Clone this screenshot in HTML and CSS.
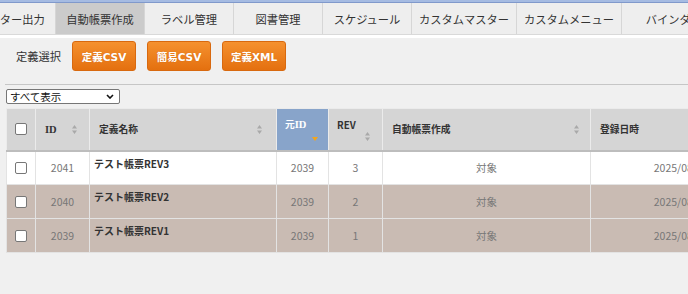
FILE: index.html
```html
<!DOCTYPE html>
<html lang="ja">
<head>
<meta charset="utf-8">
<title>自動帳票作成</title>
<link rel="stylesheet" href="styles.css">
</head>
<body>
<div class="topline"></div>
<nav class="tabs">
  <a class="tab tab-cut">マスター出力</a>
  <a class="tab active">自動帳票作成</a>
  <a class="tab">ラベル管理</a>
  <a class="tab">図書管理</a>
  <a class="tab">スケジュール</a>
  <a class="tab wide">カスタムマスター</a>
  <a class="tab wide">カスタムメニュー</a>
  <a class="tab wide">バインダー</a>
</nav>
<div class="toolbar">
  <span class="label">定義選択</span>
  <button class="btn">定義CSV</button>
  <button class="btn">簡易CSV</button>
  <button class="btn">定義XML</button>
</div>
<div class="content">
  <div class="filter">
    <div class="select-wrap">
      <select class="select"><option>すべて表示</option></select>
      <svg class="chev" width="8" height="5" viewBox="0 0 8 5"><path d="M1 1 L4 4 L7 1" fill="none" stroke="#111" stroke-width="1.6"/></svg>
    </div>
  </div>
  <table class="grid">
    <colgroup>
      <col class="w-check"><col class="w-id"><col class="w-name"><col class="w-src"><col class="w-rev"><col class="w-auto"><col class="w-date">
    </colgroup>
    <thead>
      <tr>
        <th class="h-check"><input type="checkbox" class="cb"></th>
        <th><div class="hc"><span class="serif">ID</span><svg class="sort" width="5" height="9" viewBox="0 0 5 9"><path d="M2.5 0 L5 3.5 L0 3.5Z M0 5.5 L5 5.5 L2.5 9Z" fill="#a9a9a9"/></svg></div></th>
        <th><div class="hc hc-name"><span>定義名称</span><svg class="sort" width="5" height="9" viewBox="0 0 5 9"><path d="M2.5 0 L5 3.5 L0 3.5Z M0 5.5 L5 5.5 L2.5 9Z" fill="#a9a9a9"/></svg></div></th>
        <th class="h-sorted"><div class="hs"><span>元<span class="serif">ID</span></span><div class="icon-row"><svg width="6" height="4" viewBox="0 0 6 4"><path d="M0 0 L6 0 L3 4Z" fill="#f3a51c"/></svg></div></div></th>
        <th><div class="hs hs-rev"><span>REV</span><div class="icon-row"><svg class="sort" width="5" height="9" viewBox="0 0 5 9"><path d="M2.5 0 L5 3.5 L0 3.5Z M0 5.5 L5 5.5 L2.5 9Z" fill="#a9a9a9"/></svg></div></div></th>
        <th><div class="hc hc-auto"><span>自動帳票作成</span><svg class="sort" width="5" height="9" viewBox="0 0 5 9"><path d="M2.5 0 L5 3.5 L0 3.5Z M0 5.5 L5 5.5 L2.5 9Z" fill="#a9a9a9"/></svg></div></th>
        <th><div class="hc"><span>登録日時</span></div></th>
      </tr>
    </thead>
    <tbody>
      <tr class="row">
        <td class="c-check"><input type="checkbox" class="cb"></td>
        <td class="num">2041</td>
        <td class="name">テスト帳票REV3</td>
        <td class="num">2039</td>
        <td class="num">3</td>
        <td class="num">対象</td>
        <td class="num">2025/08/01 10:21</td>
      </tr>
      <tr class="row old">
        <td class="c-check"><input type="checkbox" class="cb"></td>
        <td class="num">2040</td>
        <td class="name">テスト帳票REV2</td>
        <td class="num">2039</td>
        <td class="num">2</td>
        <td class="num">対象</td>
        <td class="num">2025/08/01 10:18</td>
      </tr>
      <tr class="row old">
        <td class="c-check"><input type="checkbox" class="cb"></td>
        <td class="num">2039</td>
        <td class="name">テスト帳票REV1</td>
        <td class="num">2039</td>
        <td class="num">1</td>
        <td class="num">対象</td>
        <td class="num">2025/08/01 10:15</td>
      </tr>
    </tbody>
  </table>
</div>
</body>
</html>
```
FILE: styles.css
```css
* { box-sizing: border-box; }
html, body { margin: 0; }
body {
  width: 688px;
  height: 294px;
  overflow: hidden;
  background: #f0f0f0;
  font-family: "Noto Sans CJK JP", "Noto Sans", sans-serif;
  color: #333;
}
.topline {
  height: 3px;
  background: #a5bbe2;
  border-bottom: 1px solid #8099cb;
}
.tabs {
  display: flex;
  height: 32px;
  background: #eeeeee;
  border-bottom: 1px solid #d9d9d9;
  white-space: nowrap;
}
.tab {
  flex: none;
  width: 89px;
  display: flex;
  align-items: center;
  justify-content: center;
  font-size: 11.25px;
  color: #333;
  border-right: 1px solid #d6d6d6;
  text-decoration: none;
}
.tab-cut { margin-left: -33px; }
.tab.wide { width: 105px; }
.tab.active { background: #cbcbcb; }

.toolbar {
  display: flex;
  align-items: center;
  gap: 11px;
  border-top: 3px solid #fff;
  padding: 3px 0 13px 16px;
}
.label { font-size: 11.25px; color: #333; }
.btn {
  width: 64px;
  height: 30px;
  padding: 0;
  border: 1px solid #d8690f;
  border-radius: 3px;
  background: linear-gradient(#f5912f, #e4700f);
  color: #fff;
  font-family: "DejaVu Sans", "Noto Sans CJK JP", sans-serif;
  font-weight: bold;
  font-size: 10.5px;
  text-shadow: 0 0 1px rgba(160, 70, 0, 0.4);
}

.content {
  margin-left: 5px;
  border-top: 1px solid #c6c6c6;
  padding: 4px 0 0 1px;
}
.filter { height: 15px; }
.select-wrap {
  position: relative;
  width: 114px;
  height: 15px;
}
.select {
  appearance: none;
  -webkit-appearance: none;
  display: block;
  width: 114px;
  height: 15px;
  margin: 0;
  padding: 0 0 0 3px;
  border: 1px solid #767676;
  border-radius: 2px;
  background: #fff;
  font-family: "Noto Sans CJK JP", sans-serif;
  font-size: 10.5px;
  line-height: 13px;
  color: #111;
}
.chev {
  position: absolute;
  right: 6px;
  top: 5px;
  pointer-events: none;
}

.grid {
  margin-top: 4px;
  border-collapse: collapse;
  table-layout: fixed;
  width: 794px;
}
.w-check { width: 29px; }
.w-id { width: 54px; }
.w-name { width: 187px; }
.w-src { width: 52px; }
.w-rev { width: 54px; }
.w-auto { width: 208px; }
.w-date { width: 210px; }

.grid thead tr { height: 42px; }
.grid th {
  padding: 0;
  background: #d5d5d5;
  border: 1px solid #ebebeb;
  border-bottom: 2px solid #bdbdbd;
  font-size: 9.75px;
  font-weight: bold;
  text-align: left;
  color: #333;
}
.grid th.h-check { text-align: center; }
.grid th.h-sorted { background: #88a4ca; color: #fff; }
.serif {
  font-family: "Liberation Serif", serif;
  font-size: 10.5px;
}
.hc {
  display: flex;
  align-items: center;
  justify-content: space-between;
  padding: 0 12px 0 9px;
}
.hc-name { padding-right: 14px; }
.hc-auto { padding-right: 11px; }
.hs {
  display: flex;
  flex-direction: column;
  padding: 0 10px 0 8px;
  line-height: 14px;
}
.hs-rev { padding: 0 12px 0 8px; }
.icon-row {
  display: flex;
  justify-content: flex-end;
  align-items: flex-end;
  height: 9px;
}
.sort { display: block; }

.grid tbody tr { height: 34px; }
.grid td {
  padding: 0;
  border: 1px solid #e3e3e3;
  background: #fff;
  font-size: 10.5px;
  color: #777;
  white-space: nowrap;
  overflow: hidden;
}
.grid tr.old td { background: #c9bbb3; }
.grid td.c-check, .grid td.num { text-align: center; vertical-align: middle; }
.grid td.name {
  vertical-align: top;
  padding: 4px 5px 0 4px;
  font-size: 10px;
  font-weight: bold;
  color: #333;
}
.cb {
  appearance: none;
  -webkit-appearance: none;
  display: block;
  margin: 0 auto;
  width: 12px;
  height: 12px;
  border: 1px solid #777;
  border-radius: 2px;
  background: #fff;
}
```
